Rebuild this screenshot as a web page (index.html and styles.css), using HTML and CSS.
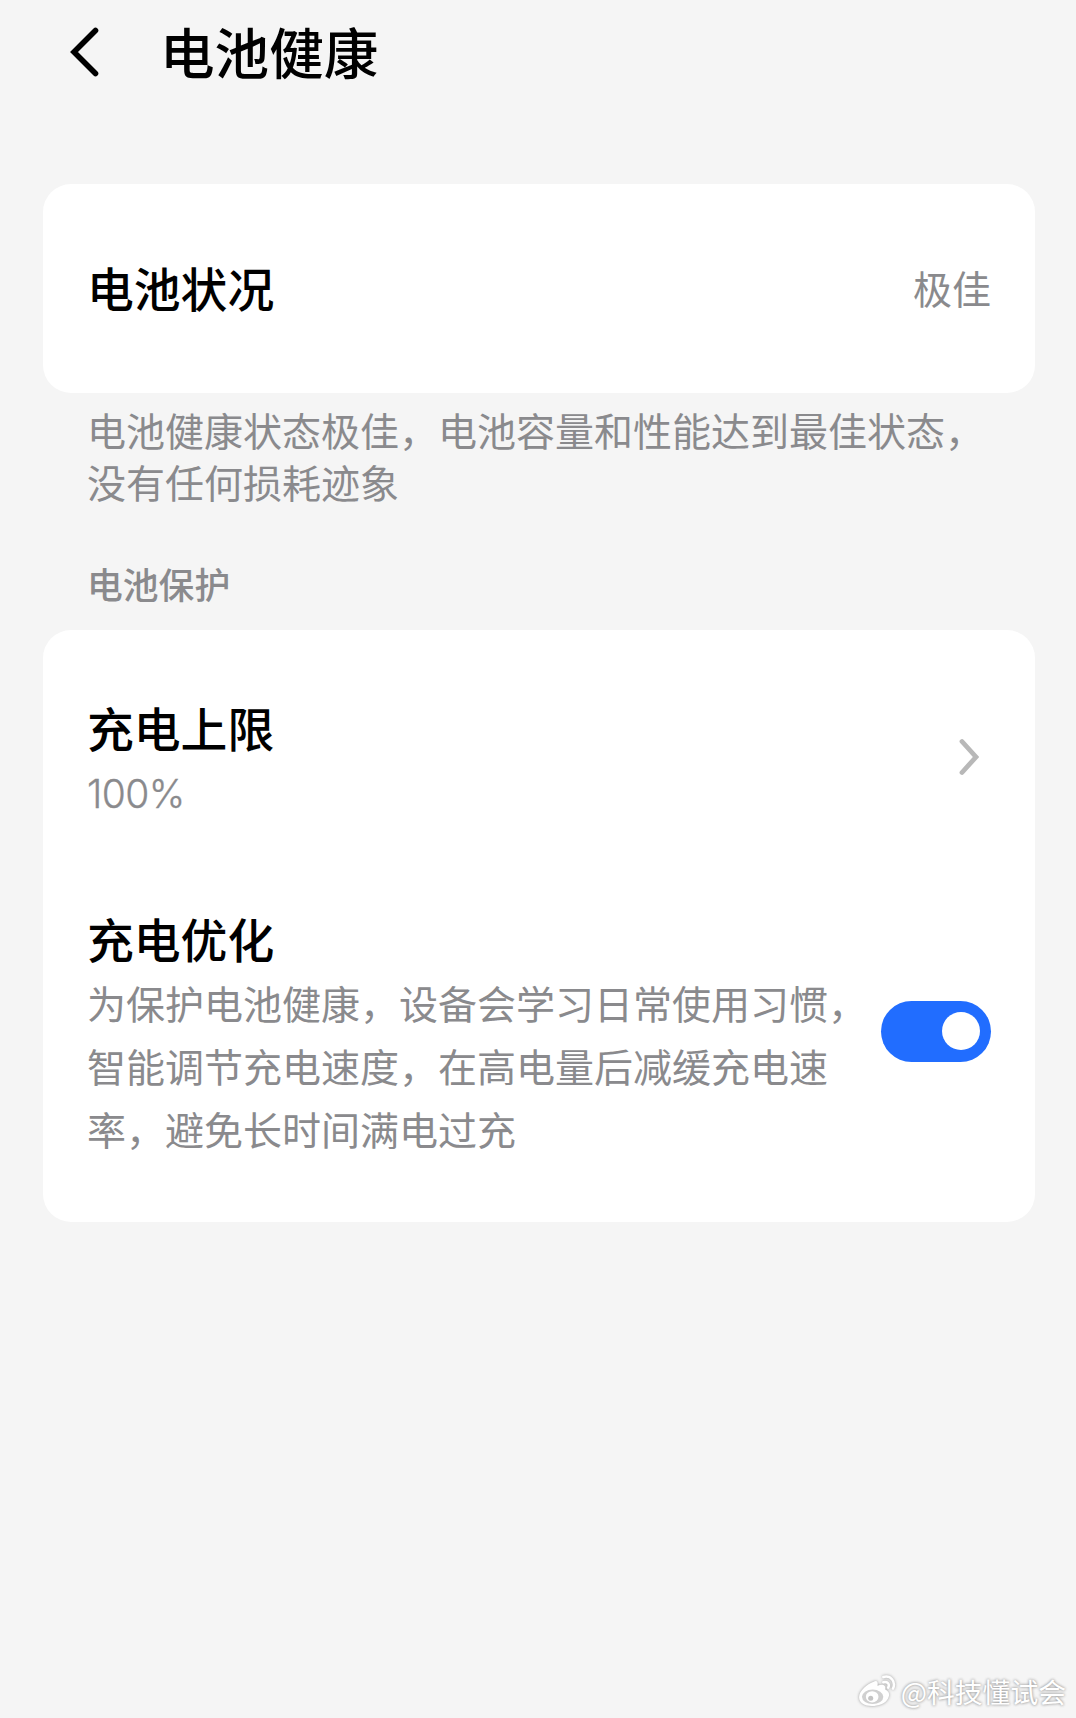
FILE: index.html
```html
<!DOCTYPE html>
<html lang="zh-CN">
<head>
    <meta charset="UTF-8">
    <meta name="viewport" content="width=device-width, initial-scale=1.0">
    <title>电池健康</title>
    <link rel="stylesheet" href="styles.css">
</head>
<body>
    <header class="header">
        <svg class="back-icon" viewBox="0 0 30 52" fill="none">
            <path d="M25.5 4.5 L4 26 L25.5 47.5" stroke="#000" stroke-width="5.6" stroke-linecap="round"/>
        </svg>
        <h1>电池健康</h1>
    </header>

    <main class="content">
        <section class="card status-card">
            <h2>电池状况</h2>
            <span class="value">极佳</span>
        </section>
        <p class="description">电池健康状态极佳，电池容量和性能达到最佳状态，<br>没有任何损耗迹象</p>

        <h3 class="section-title">电池保护</h3>
        <section class="card settings-card">
            <div class="row">
                <div class="row-text">
                    <h2>充电上限</h2>
                    <p class="percent">100%</p>
                </div>
                <svg class="chevron" viewBox="0 0 20 38" fill="none">
                    <path d="M3 3.5 L17 19 L3 34.5" stroke="#b8b8b8" stroke-width="4.8" stroke-linecap="round"/>
                </svg>
            </div>
            <div class="row">
                <div class="row-text">
                    <h2>充电优化</h2>
                    <p>为保护电池健康，设备会学习日常使用习惯，<br>智能调节充电速度，在高电量后减缓充电速<br>率，避免长时间满电过充</p>
                </div>
                <div class="toggle"><span class="knob"></span></div>
            </div>
        </section>
    </main>

    <footer class="watermark">
        <svg class="weibo-icon" viewBox="0 0 40 34">
            <path d="M16 7 C19 5 21 7 20 11 C25 9 29 10 28 15 C32 17 33 20 31 24 C28 30 21 32 14 32 C7 32 1 29 1 23 C1 16 10 9 16 7 Z" fill="#fff"/>
            <ellipse cx="15" cy="22.5" rx="11" ry="7.5" fill="#d0d0d0"/>
            <ellipse cx="14.5" cy="22.5" rx="6.5" ry="5.8" fill="#fff"/>
            <circle cx="13" cy="24" r="2.6" fill="#c4c4c4"/>
            <path d="M26 2 C34 0 39 7 36 14 M26 7.5 C30 6.5 33 9 31 13" fill="none" stroke="#fff" stroke-width="2.6" stroke-linecap="round"/>
        </svg>
        <span>@科技懂试会</span>
    </footer>
</body>
</html>
```

FILE: styles.css
```css
* {
    box-sizing: border-box;
}

body {
    margin: 0;
    height: 1718px;
    display: flex;
    flex-direction: column;
    background-color: #f5f5f5;
    color: #000;
    font-family: "Noto Sans CJK SC", sans-serif;
}

h1, h2, h3, p {
    margin: 0;
    font-weight: 500;
    white-space: nowrap;
}

/* Header */
.header {
    display: flex;
    align-items: center;
    height: 102px;
    padding-left: 70px;
}

.back-icon {
    width: 30px;
    height: 52px;
    margin-top: 2px;
}

h1 {
    margin-left: 60px;
    font-size: 54.6px;
    line-height: 80px;
}

/* Cards */
.content {
    padding: 82px 41px 0 43px;
}

.card {
    background-color: #fff;
    border-radius: 28px;
}

h2 {
    font-size: 46.8px;
    line-height: 66px;
}

.status-card {
    display: flex;
    justify-content: space-between;
    align-items: center;
    height: 209px;
    padding: 0 44px 3px 44px;
}

.value,
.description,
.row-text p {
    color: #8a8a8d;
    font-size: 39px;
    font-weight: 400;
}

.description {
    margin: 10px 0 0 44px;
    line-height: 52px;
}

.section-title {
    margin: 51px 0 22px 44px;
    color: #8a8a8d;
    font-size: 35.8px;
    line-height: 50px;
}

.settings-card {
    padding: 23px 0 21px;
}

.row {
    display: flex;
    justify-content: space-between;
    align-items: center;
    padding: 41px 44px;
}

.row-text p {
    line-height: 63px;
}

.row-text .percent {
    padding-top: 2px;
    margin-bottom: -2px;
    font-family: Inter, sans-serif;
    font-weight: 300;
    letter-spacing: -0.6px;
    -webkit-text-stroke: 0.3px #8a8a8d;
}

.chevron {
    width: 20px;
    height: 38px;
    margin: 0 12px 3px 0;
}

/* Toggle */
.toggle {
    display: flex;
    justify-content: flex-end;
    align-items: center;
    width: 110px;
    height: 61px;
    margin-bottom: 3px;
    padding: 0 11px 1px 0;
    border-radius: 31px;
    background-color: #216dff;
}

.knob {
    width: 38px;
    height: 38px;
    border-radius: 50%;
    background-color: #fff;
}

/* Watermark */
.watermark {
    display: flex;
    justify-content: flex-end;
    align-items: center;
    gap: 4px;
    margin-top: auto;
    height: 54px;
    padding-right: 10px;
    color: #fff;
    font-size: 27.8px;
    line-height: 40px;
    text-shadow: 0 0 3px #999, 0 0 3px #bbb;
}

.weibo-icon {
    width: 39px;
    height: 33px;
    filter: drop-shadow(0 0 1.5px #999);
}
```
